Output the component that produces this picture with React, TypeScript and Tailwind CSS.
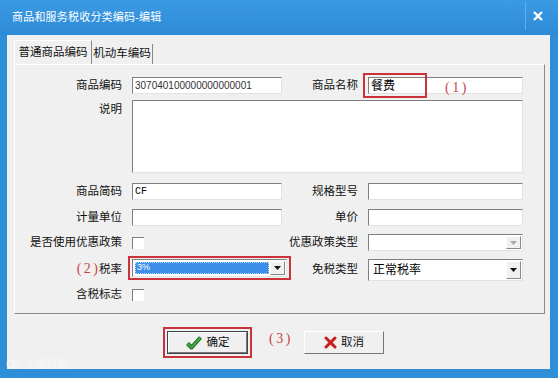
import React from "react";

const sunken =
  "border border-[#7f7f7f] border-r-[#e2e2e2] border-b-[#e2e2e2] bg-white";

function Label({ children }: { children: React.ReactNode }) {
  return (
    <div className="flex items-center justify-end pr-[10px] text-[11.5px] text-[#111] whitespace-nowrap">
      {children}
    </div>
  );
}

function Input({ value, className = "" }: { value?: string; className?: string }) {
  return (
    <div className={`h-[17px] flex items-center pl-[2px] overflow-hidden ${sunken} ${className}`}>
      {value}
    </div>
  );
}

function Arrow({ disabled }: { disabled?: boolean }) {
  return (
    <div className="w-[15px] h-full flex items-center justify-center bg-[#f0f0f0] border border-white border-r-[#888] border-b-[#888]">
      <svg width="7" height="4" viewBox="0 0 7 4">
        <path d="M0 0 H7 L3.5 4 Z" fill={disabled ? "#a8a8a8" : "#111"} />
      </svg>
    </div>
  );
}

function Check() {
  return <div className={`w-[12px] h-[12px] ${sunken} border-r-0 border-b-0 bg-[#f6f6f6]`} />;
}

function Red({ children }: { children: React.ReactNode }) {
  return (
    <span className="text-[#c9453c] text-[14px] tracking-[2.5px] mr-[-2.5px] font-['Liberation_Serif',serif]">
      {children}
    </span>
  );
}

export default function App() {
  return (
    <div className="w-[558px] h-[378px] bg-[#2f8ed8] flex flex-col relative overflow-hidden font-['Liberation_Sans','Noto_Sans_CJK_SC',sans-serif]">
      {/* title bar */}
      <div className="h-[35px] flex items-center bg-gradient-to-b from-[#3a9ae2] to-[#2d8bd6] relative">
        <span className="ml-[12px] text-white text-[11px] tracking-[0.2px]">
          商品和服务税收分类编码-编辑
        </span>
        <div className="absolute left-[525px] top-[2px] h-[28px] w-px bg-[#5fb0ea]" />
        <svg className="absolute left-[533px] top-[11px]" width="10" height="10" viewBox="0 0 10 10">
          <path d="M1 1 L9 9 M9 1 L1 9" stroke="#fff" strokeWidth="2.4" />
        </svg>
      </div>

      {/* body */}
      <div className="flex-1 ml-[7px] mr-[8px] mb-[9px] bg-[#f0f0f0] border-t border-[#e8f2fa] flex flex-col">
        {/* tabs */}
        <div className="ml-[7px] mt-[4px] h-[24px] flex items-end text-[11.5px] text-[#111]">
          <div className="h-[24px] w-[78px] flex items-center justify-center border-t border-l border-white border-r border-r-[#888]">
            普通商品编码
          </div>
          <div className="h-[20px] w-[61px] flex items-center justify-center border-r border-[#888]">
            机动车编码
          </div>
        </div>

        {/* panel */}
        <div className="ml-[7px] w-[531px] h-[250px] border border-white border-r-[#8a8a8a] border-b-[#8a8a8a] pt-[12px] flex flex-col">
          <div className="grid grid-cols-[117px_150px_86px_155px] h-[17px]">
            <Label>商品编码</Label>
            <Input value="307040100000000000001" className="text-[10px] text-[#333]" />
            <Label>商品名称</Label>
            <div className="relative">
              <Input value="餐费" className="text-[12px] text-black" />
              <div className="absolute left-[-5px] top-[-4px] w-[64px] h-[25px] border-2 border-[#c8343a]" />
              <div className="absolute left-[77px] top-[-2px]">
                <Red>(1)</Red>
              </div>
            </div>
          </div>

          <div className="grid grid-cols-[117px_391px] mt-[6px] h-[73px]">
            <div className="flex justify-end pr-[10px] pt-[1px] text-[11.5px] text-[#111]">说明</div>
            <div className={sunken} />
          </div>

          <div className="grid grid-cols-[117px_150px_86px_155px] mt-[10px] h-[17px]">
            <Label>商品简码</Label>
            <Input value="CF" className="text-[10px] text-black font-['Liberation_Mono',monospace]" />
            <Label>规格型号</Label>
            <Input />
          </div>

          <div className="grid grid-cols-[117px_150px_86px_155px] mt-[9px] h-[17px]">
            <Label>计量单位</Label>
            <Input />
            <Label>单价</Label>
            <Input />
          </div>

          <div className="grid grid-cols-[117px_150px_86px_155px] mt-[8px] h-[17px]">
            <Label>是否使用优惠政策</Label>
            <div className="flex items-center">
              <Check />
            </div>
            <Label>优惠政策类型</Label>
            <div className={`flex justify-end p-px ${sunken}`}>
              <Arrow disabled />
            </div>
          </div>

          <div className="grid grid-cols-[117px_150px_86px_155px] mt-[8px] h-[18px]">
            <Label>
              <span className="-mt-[3px] mr-[1px]">
                <Red>(2)</Red>
              </span>
              税率
            </Label>
            <div className="relative">
              <div className={`w-[155px] h-[18px] flex p-px ${sunken}`}>
                <div className="flex-1 m-px bg-[#3d8ee8] border border-dotted border-[#bcd8f6] flex items-center pl-[1px] text-white text-[9px]">
                  3%
                </div>
                <Arrow />
              </div>
              <div className="absolute left-[-4px] top-[-3px] w-[163px] h-[24px] border-2 border-[#c8343a]" />
            </div>
            <Label>免税类型</Label>
            <div className={`flex p-px ${sunken}`}>
              <div className="flex-1 flex items-center pl-[3px] text-[12px] text-black">正常税率</div>
              <Arrow />
            </div>
          </div>

          <div className="grid grid-cols-[117px_150px] mt-[9px] h-[17px]">
            <Label>含税标志</Label>
            <div className="flex items-center">
              <Check />
            </div>
          </div>
        </div>

        {/* buttons */}
        <div className="flex items-center mt-[13px] ml-[156px]">
          <div className="border-2 border-[#c8343a] p-[2px]">
            <div className="w-[81px] h-[23px] border border-[#444] flex">
              <div className="flex-1 flex items-center justify-center gap-[5px] bg-[#f0f0f0] border border-white border-r-[#777] border-b-[#777] text-[11.5px] text-[#111]">
                <svg width="16" height="14" viewBox="0 0 16 14">
                  <path d="M1.5 7.5 L5.5 11.5 L14.5 1.5" fill="none" stroke="#1f5d1f" strokeWidth="4" strokeLinejoin="round" />
                  <path d="M1.5 7.5 L5.5 11.5 L14.5 1.5" fill="none" stroke="#3ea83a" strokeWidth="2.4" strokeLinejoin="round" />
                </svg>
                确定
              </div>
            </div>
          </div>
          <div className="ml-[17px] w-[35px] -mt-[10px]">
            <Red>(3)</Red>
          </div>
          <div className="w-[80px] h-[23px] flex items-center justify-center gap-[4px] bg-[#f0f0f0] border border-white border-r-[#777] border-b-[#777] text-[11.5px] text-[#111]">
            <svg width="13" height="13" viewBox="0 0 13 13">
              <path d="M2 2 L11 11 M11 2 L2 11" stroke="#c81e1e" strokeWidth="3" strokeLinecap="round" />
            </svg>
            取消
          </div>
        </div>
      </div>

      {/* watermark */}
      <div className="absolute left-[6px] top-[356px] flex items-center gap-[4px] text-white/50 text-[11px]">
        <svg width="14" height="10" viewBox="0 0 14 10">
          <circle cx="5" cy="5" r="4" fill="none" stroke="rgba(255,255,255,0.55)" strokeWidth="1.2" />
          <circle cx="10" cy="4" r="3" fill="none" stroke="rgba(255,255,255,0.55)" strokeWidth="1" />
        </svg>
        大账财税
      </div>
    </div>
  );
}
